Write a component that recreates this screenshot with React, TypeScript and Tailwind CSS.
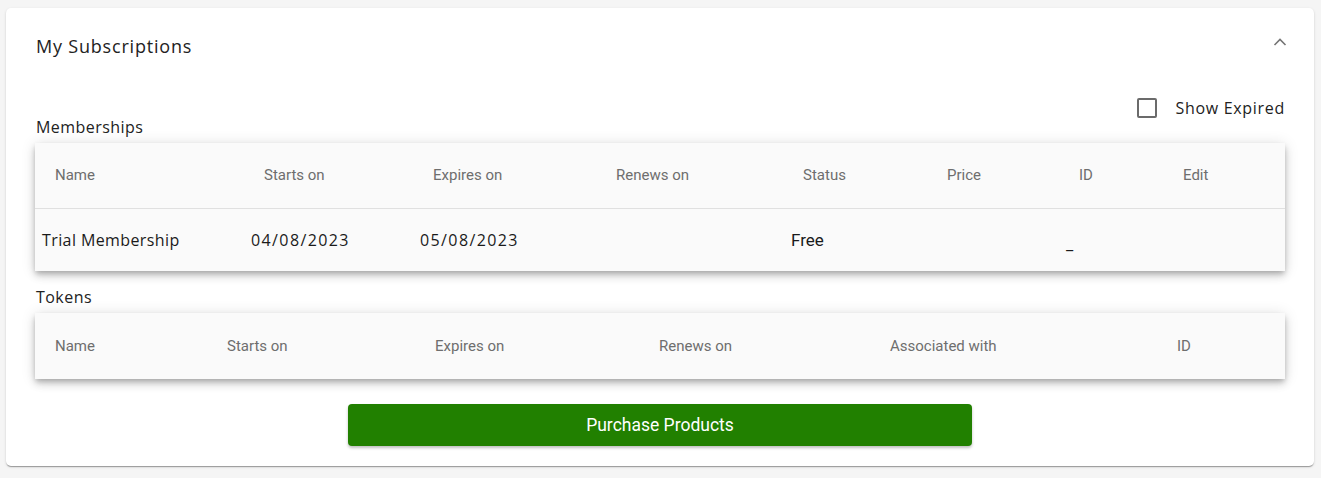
const roundFont = "font-['Open_Sans',sans-serif]";
const narrowFont = "font-['Liberation_Sans_Narrow','Roboto',sans-serif]";

const membershipCols = ["Name", "Starts on", "Expires on", "Renews on", "Status", "Price", "ID", "Edit"];
const tokenCols = ["Name", "Starts on", "Expires on", "Renews on", "Associated with", "ID"];

const tableShadow =
  "shadow-[0_3px_5px_-1px_rgba(0,0,0,0.2),0_5px_8px_0_rgba(0,0,0,0.14),0_1px_14px_0_rgba(0,0,0,0.12)]";

const App = () => {
  return (
    <div className="min-h-screen bg-[#f5f5f5] pt-[8px] pl-[6px] pr-[7px] pb-[12px]">
      <div className="bg-white rounded-[5px] px-[29px] pb-[20px] shadow-[0_2px_1px_-1px_rgba(0,0,0,0.2),0_1px_1px_0_rgba(0,0,0,0.14),0_1px_3px_0_rgba(0,0,0,0.12)]">
        {/* Header */}
        <div className="h-[76px] flex items-center justify-between">
          <h2 className={`${roundFont} text-[18px] tracking-[0.8px] text-[#222] pl-[1px]`}>My Subscriptions</h2>
          <svg width="14" height="10" viewBox="0 0 14 10" className="mr-[-2px] mb-[8px]">
            <polyline points="1.5,8 7,2.5 12.5,8" fill="none" stroke="#757575" strokeWidth="1.6" />
          </svg>
        </div>

        {/* Show expired */}
        <div className="mt-[14px] h-[19px] flex items-center justify-end">
          <div className="w-[20px] h-[20px] border-2 border-[#6b6b6b] rounded-[2px]" />
          <span className={`${roundFont} text-[16px] tracking-[0.7px] text-[#222] ml-[18px]`}>Show Expired</span>
        </div>

        {/* Memberships */}
        <div className={`${roundFont} text-[16px] tracking-[0.45px] leading-[20px] text-[#222] pl-[1px]`}>Memberships</div>
        <div className={`mt-[6px] bg-[#fafafa] ${tableShadow}`}>
          <div className="grid grid-cols-[209px_169px_183px_187px_144px_132px_104px_1fr] h-[66px] items-center border-b border-[#e0e0e0]">
            {membershipCols.map((c) => (
              <div key={c} className={`${narrowFont} pl-[20px] text-[15px] text-[#6e6e6e]`}>
                {c}
              </div>
            ))}
          </div>
          <div className="grid grid-cols-[209px_169px_183px_187px_144px_132px_104px_1fr] h-[62px] items-center text-[16px] text-[#1a1a1a]">
            <div className={`${roundFont} tracking-[0.4px] pl-[7px]`}>Trial Membership</div>
            <div className={`${roundFont} tracking-[1.4px] pl-[7px]`}>04/08/2023</div>
            <div className={`${roundFont} tracking-[1.4px] pl-[7px]`}>05/08/2023</div>
            <div className="pl-[7px]" />
            <div className={`${narrowFont} text-[17px] pl-[8px] pt-[2px]`}>Free</div>
            <div className="pl-[7px]" />
            <div className={`${narrowFont} pl-[7px] pt-[10px]`}>_</div>
            <div />
          </div>
        </div>

        {/* Tokens */}
        <div className={`${roundFont} text-[16px] tracking-[0.45px] leading-[20px] text-[#222] pl-[1px] mt-[16px]`}>Tokens</div>
        <div className={`mt-[6px] bg-[#fafafa] ${tableShadow}`}>
          <div className="grid grid-cols-[172px_208px_224px_231px_287px_1fr] h-[66px] items-center">
            {tokenCols.map((c) => (
              <div key={c} className={`${narrowFont} pl-[20px] text-[15px] text-[#6e6e6e]`}>
                {c}
              </div>
            ))}
          </div>
        </div>

        {/* Purchase */}
        <div className="mt-[25px] flex justify-center">
          <button
            className={`${narrowFont} w-[624px] h-[42px] bg-[#218000] text-white text-[17.5px] rounded-[4px] shadow-[0_2px_3px_rgba(0,0,0,0.25)]`}
          >
            Purchase Products
          </button>
        </div>
      </div>
    </div>
  );
};

export default App;
